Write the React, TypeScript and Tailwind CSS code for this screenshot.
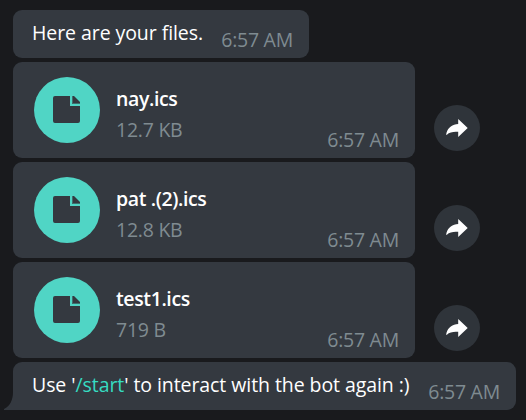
import React from "react";

const files = [
  { name: "nay.ics", size: "12.7 KB" },
  { name: "pat .(2).ics", size: "12.8 KB" },
  { name: "test1.ics", size: "719 B" },
];

function Time() {
  return (
    <span className="text-[19.5px] leading-6 tracking-[-0.25px] whitespace-nowrap text-[#7f8b91]">6:57 AM</span>
  );
}

function FileIcon() {
  return (
    <div className="flex size-[66px] shrink-0 items-center justify-center rounded-full bg-[#50d5c5]">
      <svg width="28" height="28" viewBox="0 0 28 28">
        <path d="M2 0H17V10H27V25a2 2 0 0 1-2 2H2a2 2 0 0 1-2-2V2a2 2 0 0 1 2-2Z" fill="#343940" />
        <path d="M19 0h2l6 6v2h-8Z" fill="#343940" />
        <path d="M19.5 0v7.5H27" fill="none" stroke="#50d5c5" strokeWidth="1" opacity=".35" />
      </svg>
    </div>
  );
}

function FileMessage({ name, size }: { name: string; size: string }) {
  return (
    <div className="flex items-end gap-[19px]">
      <div className="flex h-24 w-[402px] rounded-[9px] bg-[#343940] pl-[21px] pr-4 pt-[15px]">
        <FileIcon />
        <div className="ml-4 flex-1 pt-[9px]">
          <div className="text-[19.5px] font-semibold leading-[26px] tracking-[-0.38px] text-white">{name}</div>
          <div className="mt-[5px] text-[19.5px] leading-[26px] tracking-[-0.25px] text-[#7f8b91]">{size}</div>
        </div>
        <div className="flex items-end pb-[6px]">
          <Time />
        </div>
      </div>
      <button className="mb-[7px] flex size-[46px] items-center justify-center rounded-full bg-[#2f343a]">
        <svg width="22" height="18" viewBox="0 0 22 18" fill="white">
          <path d="M12.2.1 21.7 9l-9.5 8.9v-5.1C7.5 12.5 3.5 13 .9 15.8.1 16.6.1 15 .6 13.5 2.2 8.5 6.5 5.6 12.2 5.1Z" />
        </svg>
      </button>
    </div>
  );
}

export default function App() {
  return (
    <main className="flex h-[420px] w-[526px] flex-col gap-1 overflow-hidden bg-[#191a1d] pl-[13px] pt-[10px] font-['Open_Sans',sans-serif]">
      <div className="flex h-12 w-[296px] items-end justify-between rounded-[9px] bg-[#343940] pb-[6px] pl-[19px] pr-4">
        <span className="mb-[7px] whitespace-nowrap text-[19.5px] leading-6 tracking-[-0.07px] text-white">Here are your files.</span>
        <Time />
      </div>
      {files.map((f) => (
        <FileMessage key={f.name} {...f} />
      ))}
      <div className="relative flex h-12 w-[503px] items-end justify-between rounded-[9px] rounded-bl-none bg-[#343940] pb-[6px] pl-[19px] pr-4">
        <svg className="absolute -left-[9px] bottom-0" width="9" height="18" viewBox="0 0 9 18">
          <path d="M9 0C9 8 6 14 0 17v1h9Z" fill="#343940" />
        </svg>
        <span className="mb-[7px] whitespace-nowrap text-[19.5px] leading-6 tracking-[-0.07px] text-white">
          Use '<span className="text-[#36dcc1]">/start</span>' to interact with the bot again :)
        </span>
        <Time />
      </div>
    </main>
  );
}
